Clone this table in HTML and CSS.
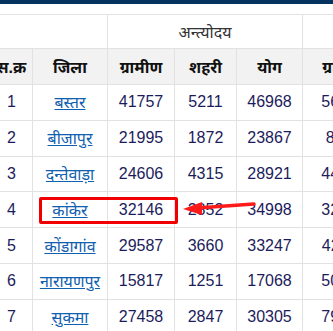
FILE: index.html
```html
<!DOCTYPE html>
<html lang="hi">
<head>
<meta charset="utf-8">
<link rel="stylesheet" href="styles.css">
</head>
<body>
<div class="topbar"></div>
<div class="wrap">
<table class="grid">
<colgroup>
<col class="c1"><col class="c2"><col class="c3"><col class="c4"><col class="c5"><col class="c6"><col class="c7"><col class="c8">
</colgroup>
<thead>
<tr class="group"><th colspan="2"></th><th colspan="3">अन्त्योदय</th><th colspan="3"></th></tr>
<tr class="cols"><th>स.क्र</th><th>जिला</th><th>ग्रामीण</th><th>शहरी</th><th>योग</th><th>ग्रामीण</th><th>शहरी</th><th>योग</th></tr>
</thead>
<tbody>
<tr><td>1</td><td><a href="#">बस्तर</a></td><td>41757</td><td>5211</td><td>46968</td><td>56301</td><td>0</td><td>0</td></tr>
<tr><td>2</td><td><a href="#">बीजापुर</a></td><td>21995</td><td>1872</td><td>23867</td><td>8912</td><td>0</td><td>0</td></tr>
<tr><td>3</td><td><a href="#">दन्तेवाड़ा</a></td><td>24606</td><td>4315</td><td>28921</td><td>44210</td><td>0</td><td>0</td></tr>
<tr><td>4</td><td><a href="#">कांकेर</a></td><td>32146</td><td>2852</td><td>34998</td><td>32456</td><td>0</td><td>0</td></tr>
<tr><td>5</td><td><a href="#">कोंडागांव</a></td><td>29587</td><td>3660</td><td>33247</td><td>42118</td><td>0</td><td>0</td></tr>
<tr><td>6</td><td><a href="#">नारायणपुर</a></td><td>15817</td><td>1251</td><td>17068</td><td>50342</td><td>0</td><td>0</td></tr>
<tr><td>7</td><td><a href="#">सुकमा</a></td><td>27458</td><td>2847</td><td>30305</td><td>79123</td><td>0</td><td>0</td></tr>
</tbody>
</table>
<div class="highlight"></div>
<svg class="arrow" width="80" height="18" viewBox="0 0 80 18">
<line x1="71" y1="5" x2="14" y2="9" stroke="#ff1a1a" stroke-width="3.5" stroke-linecap="round"/>
<polygon points="0,10 19,3 19,16" fill="#ff1a1a"/>
</svg>
</div>
</body>
</html>
```
FILE: styles.css
```css
html, body {
  margin: 0;
  padding: 0;
  overflow: hidden;
  background: #fff;
}
body {
  width: 333px;
  height: 331px;
  font-family: "Liberation Sans", Arial, "Noto Sans", sans-serif;
}
.topbar {
  height: 4px;
  background: #05335f;
}
.wrap {
  position: relative;
  padding-top: 10px;
}
.grid {
  border-collapse: collapse;
  table-layout: fixed;
  width: 560px;
  margin-left: -10px;
}
.c1 { width: 42px; }
.c2 { width: 75px; }
.c3 { width: 67px; }
.c4 { width: 62px; }
.c5 { width: 66px; }
.c6 { width: 82px; }
.c7 { width: 82px; }
.c8 { width: 84px; }
.grid th, .grid td {
  border: 1px solid #e2e2e2;
  text-align: center;
  padding: 0;
  white-space: nowrap;
  overflow: hidden;
}
.group th {
  height: 33px;
  font-weight: normal;
  font-size: 16px;
  color: #333;
  background: #fff;
}
.cols th {
  height: 35px;
  font-weight: bold;
  font-size: 16px;
  color: #111;
  background: #f2f2f2;
}
.grid td {
  height: 34.8px;
  font-size: 16px;
  color: #1c1c5c;
}
.grid td a {
  color: #1060b0;
  text-decoration: underline;
}
.highlight {
  position: absolute;
  left: 39px;
  top: 193px;
  width: 133px;
  height: 21px;
  border: 3px solid #f20000;
  border-radius: 2px;
}
.arrow {
  position: absolute;
  left: 183px;
  top: 195px;
}
```
